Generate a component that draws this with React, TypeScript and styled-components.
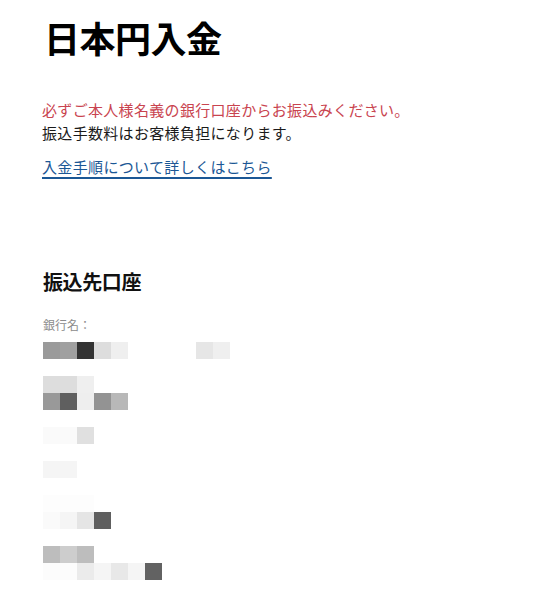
import React from "react";
import styled, { createGlobalStyle } from "styled-components";

const GlobalStyle = createGlobalStyle`
  html, body {
    margin: 0;
    padding: 0;
    background: #ffffff;
  }
  body {
    font-family: "Noto Sans CJK JP", "Noto Sans", sans-serif;
    color: #111111;
  }
`;

const Page = styled.main`
  padding: 15px 43px 0;
  width: 542px;
  box-sizing: border-box;
`;

const Title = styled.h1`
  margin: 0;
  font-size: 36px;
  line-height: 44px;
  font-weight: 700;
  color: #000000;
  letter-spacing: -0.5px;
  margin-left: 1px;
`;

const Notice = styled.div`
  margin-top: 39px;
  display: flex;
  flex-direction: column;
`;

const Line = styled.p<{ $tone?: "warn" | "plain" }>`
  margin: 0;
  margin-left: -1px;
  font-size: 15px;
  line-height: 23px;
  color: ${(p) => (p.$tone === "warn" ? "#c9444f" : "#1a1a1a")};
  letter-spacing: 0.32px;
`;

const GuideLink = styled.a`
  display: inline-block;
  margin-top: 11px;
  margin-left: -1px;
  font-size: 15px;
  line-height: 23px;
  color: #1b5795;
  text-decoration: underline;
  text-decoration-thickness: 1.5px;
  text-underline-offset: 4px;
  letter-spacing: 0.35px;
  cursor: pointer;
`;

const Section = styled.section`
  margin-top: 90px;
`;

const Heading = styled.h2`
  margin: 0;
  font-size: 20px;
  line-height: 28px;
  font-weight: 700;
  color: #111111;
  letter-spacing: -0.4px;
`;

const FieldLabel = styled.div`
  margin-top: 20px;
  font-size: 12px;
  line-height: 18px;
  color: #8c8c8c;
`;

const Mosaic = styled.div`
  margin-top: 8px;
  display: grid;
  grid-template-columns: repeat(11, 17px);
  grid-auto-rows: 17px;
`;

const Cell = styled.div<{ $c: string }>`
  background: ${(p) => p.$c};
`;

const W = "#ffffff";
const rows: string[][] = [
  ["#9a9a9a", "#a0a0a0", "#333333", "#dddddd", "#efefef", W, W, W, W, "#e6e6e6", "#efefef"],
  [],
  ["#dddddd", "#dddddd", "#efefef"],
  ["#999999", "#5f5f5f", "#eeeeee", "#939393", "#b8b8b8"],
  [],
  ["#fafafa", "#fafafa", "#e0e0e0"],
  [],
  ["#f5f5f5", "#f5f5f5"],
  [],
  ["#fdfdfd", "#fdfdfd", "#fdfdfd"],
  ["#fafafa", "#f5f5f5", "#e5e5e5", "#5f5f5f"],
  [],
  ["#bdbdbd", "#cdcdcd", "#bdbdbd"],
  ["#fcfcfc", "#fcfcfc", "#ebebeb", "#f5f5f5", "#e8e8e8", "#f5f5f5", "#626262"],
];

export default function App() {
  return (
    <>
      <GlobalStyle />
      <Page>
        <Title>日本円入金</Title>
        <Notice>
          <Line $tone="warn">必ずご本人様名義の銀行口座からお振込みください。</Line>
          <Line>振込手数料はお客様負担になります。</Line>
          <div>
            <GuideLink>入金手順について詳しくはこちら</GuideLink>
          </div>
        </Notice>
        <Section>
          <Heading>振込先口座</Heading>
          <FieldLabel>銀行名：</FieldLabel>
          <Mosaic>
            {rows.map((r, ri) =>
              Array.from({ length: 11 }).map((_, ci) => (
                <Cell key={`${ri}-${ci}`} $c={r[ci] ?? W} />
              ))
            )}
          </Mosaic>
        </Section>
      </Page>
    </>
  );
}
